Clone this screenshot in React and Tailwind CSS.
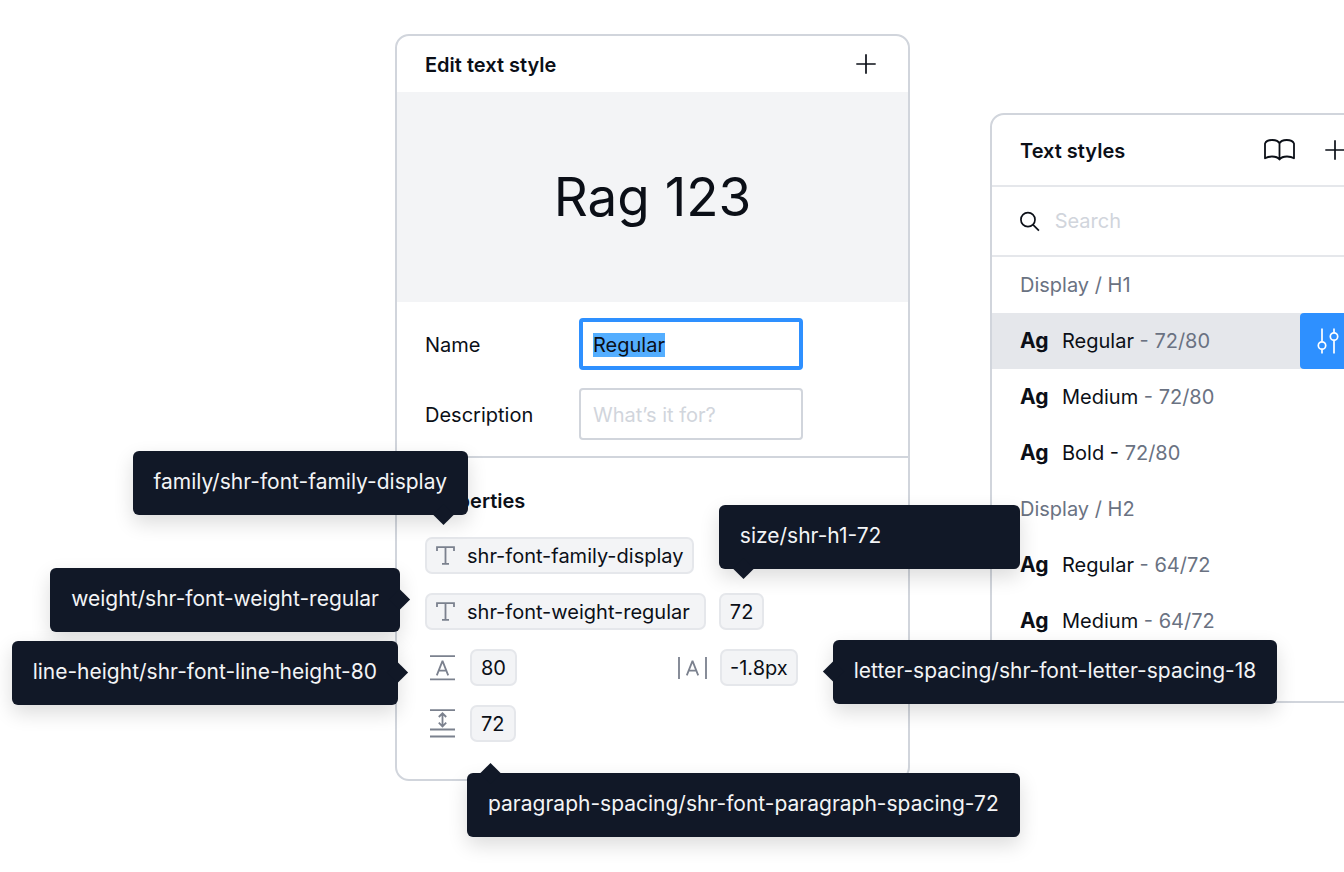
import { useEffect, useRef } from "react";

function Tooltip({ place, arrow, children }) {
  return (
    <div
      role="tooltip"
      className={`absolute z-20 rounded-md bg-[#111827] px-[21px] pt-4 pb-[18px] text-[21px] leading-[30px] whitespace-nowrap text-gray-100 shadow-[0_8px_20px_rgba(0,0,0,0.14)] ${place}`}
    >
      {children}
      <span className={`absolute size-[15px] rotate-45 bg-[#111827] ${arrow}`} />
    </div>
  );
}

function Chip({ className = "px-[9px]", children }) {
  return (
    <div
      className={`flex h-[37px] items-center rounded-[7px] border-2 border-gray-200 bg-gray-100 ${className}`}
    >
      {children}
    </div>
  );
}

function TypeIcon() {
  return (
    <svg width="19" height="19" viewBox="0 0 19 19" fill="none" stroke="#7b818e" strokeWidth="1.8" aria-hidden="true">
      <path d="M1 5V1.2h17V5M9.5 1.2v16.6M6 17.8h7" />
    </svg>
  );
}

function LineHeightIcon() {
  return (
    <svg width="25" height="26" viewBox="0 0 25 26" fill="none" stroke="#7b818e" strokeWidth="1.8" aria-hidden="true">
      <path d="M0 1.2h25M0 24.3h25" />
      <path d="M6.800 20.300 12.300 6.300h.4L18.200 20.300M8.600 15.700h7.800" />
    </svg>
  );
}

function LetterSpacingIcon() {
  return (
    <svg width="29" height="22" viewBox="0 0 29 22" fill="none" stroke="#7b818e" strokeWidth="1.8" aria-hidden="true">
      <path d="M1 0v22M28 0v22" />
      <path d="M8.800 18.300 14.300 4.300h.4L20.200 18.300M10.600 13.700h7.800" />
    </svg>
  );
}

function ParagraphSpacingIcon() {
  return (
    <svg width="25" height="29" viewBox="0 0 25 29" fill="none" stroke="#7b818e" strokeWidth="1.8" aria-hidden="true">
      <path d="M0 1.2h25M0 20.5h25M0 27.5h25" />
      <path d="M12.5 4.5v12.5M8.8 8l3.7-3.7L16.2 8M8.8 13.7l3.7 3.7 3.7-3.7" />
    </svg>
  );
}

function PlusIcon() {
  return (
    <svg width="20" height="20" viewBox="0 0 20 20" stroke="#0b0f17" strokeWidth="1.7" aria-hidden="true">
      <path d="M10 .3v19.4M.3 10h19.4" />
    </svg>
  );
}

function BookIcon() {
  return (
    <svg width="31" height="22" viewBox="0 0 31 22" fill="none" stroke="#0b0f17" strokeWidth="1.8" strokeLinejoin="round" aria-hidden="true">
      <path d="M15.500 4.500C14.500 2 12 1 8.300 1 4.500 1 2 2 1 4.500V19.300C3 18 5 17.500 8 17.500 11.500 17.500 14 18.300 15.500 20.500 17 18.300 19.500 17.500 23 17.500 26 17.500 28 18 30 19.300V4.500C29 2 26.500 1 22.700 1 19 1 16.500 2 15.500 4.500ZM15.500 4.500V20.500" />
    </svg>
  );
}

function SearchIcon() {
  return (
    <svg width="21" height="21" viewBox="0 0 21 21" fill="none" stroke="#0b0f17" strokeWidth="1.8" aria-hidden="true">
      <circle cx="8.500" cy="8.500" r="7.500" />
      <path d="m13.800 13.800 6.400 6.400" />
    </svg>
  );
}

function SlidersIcon() {
  return (
    <svg width="22" height="26" viewBox="0 0 22 26" fill="none" stroke="#fff" strokeWidth="1.7" aria-hidden="true">
      <path d="M5 .5v13M5 21.500v4M17 .5v4M17 12.500v13" />
      <circle cx="5" cy="17.500" r="3.700" />
      <circle cx="17" cy="8.500" r="3.700" />
    </svg>
  );
}

function EditPanel() {
  const nameRef = useRef(null);
  useEffect(() => {
    nameRef.current.focus();
    nameRef.current.select();
  }, []);

  return (
    <section className="mt-[34px] w-[515px] shrink-0 rounded-[14px] border-2 border-gray-300 bg-white">
      <header className="flex h-14 items-center justify-between pr-8 pl-7">
        <h2 className="pt-0.5 font-semibold">Edit text style</h2>
        <button type="button" aria-label="Add">
          <PlusIcon />
        </button>
      </header>
      <div className="flex h-[210px] items-center justify-center bg-gray-100 text-[53px] leading-none">
        Rag 123
      </div>
      <div className="grid grid-cols-[154px_224px] items-center gap-y-[18px] border-b-2 border-gray-300 px-7 py-4">
        <label htmlFor="style-name" className="pt-0.5">
          Name
        </label>
        <input
          id="style-name"
          ref={nameRef}
          defaultValue="Regular"
          className="h-[52px] w-full rounded border-4 border-[#2e90ff] px-[10px] pt-0.5 leading-7 outline-none selection:bg-[#54aeff] selection:text-[#0b0f17]"
        />
        <label htmlFor="style-description" className="pt-0.5">
          Description
        </label>
        <input
          id="style-description"
          placeholder="What’s it for?"
          className="h-[52px] w-full rounded border-2 border-gray-300 px-3 pt-0.5 leading-7 outline-none placeholder:text-gray-300"
        />
      </div>
      <div className="px-7 pt-[29px] pb-[37px]">
        <h3 className="mb-[22px] font-semibold">Properties</h3>
        <div className="flex flex-col gap-[19px]">
          <div className="relative flex">
            <Chip className="gap-3 pr-[9px] pl-[9px]">
              <TypeIcon />
              shr-font-family-display
            </Chip>
            <Tooltip place="right-[calc(100%-43px)] bottom-full mb-[22px]" arrow="right-[17px] -bottom-[7px]">
              family/shr-font-family-display
            </Tooltip>
          </div>
          <div className="relative flex gap-[13px]">
            <Chip className="gap-3 pr-[14px] pl-[9px]">
              <TypeIcon />
              shr-font-weight-regular
            </Chip>
            <div className="relative">
              <Chip>72</Chip>
              <Tooltip place="bottom-full left-0 mb-6 w-[301px]" arrow="left-[17px] -bottom-[7px]">
                size/shr-h1-72
              </Tooltip>
            </div>
            <Tooltip place="right-full -top-[25px] mr-[25px]" arrow="-right-[7px] top-[24px]">
              weight/shr-font-weight-regular
            </Tooltip>
          </div>
          <div className="relative grid grid-cols-[253px_1fr]">
            <div className="flex items-center gap-[15px] pl-[5px]">
              <LineHeightIcon />
              <Chip>80</Chip>
            </div>
            <div className="flex items-center gap-[13px]">
              <LetterSpacingIcon />
              <div className="relative">
                <Chip className="px-2">-1.8px</Chip>
                <Tooltip place="left-full -top-[9px] ml-[35px]" arrow="-left-[7px] top-[24px]">
                  letter-spacing/shr-font-letter-spacing-18
                </Tooltip>
              </div>
            </div>
            <Tooltip place="right-full -top-2 mr-[27px]" arrow="-right-[7px] top-[24px]">
              line-height/shr-font-line-height-80
            </Tooltip>
          </div>
          <div className="flex items-center gap-[15px] pl-[5px]">
            <ParagraphSpacingIcon />
            <div className="relative">
              <Chip>72</Chip>
              <Tooltip place="top-full -left-[3px] mt-[31px]" arrow="left-[16px] -top-[7px]">
                paragraph-spacing/shr-font-paragraph-spacing-72
              </Tooltip>
            </div>
          </div>
        </div>
      </div>
    </section>
  );
}

const groups = [
  {
    title: "Display / H1",
    styles: [
      { name: "Regular", size: "72/80", selected: true },
      { name: "Medium", size: "72/80" },
      { name: "Bold", size: "72/80", darkDash: true },
    ],
  },
  {
    title: "Display / H2",
    styles: [
      { name: "Regular", size: "64/72" },
      { name: "Medium", size: "64/72" },
    ],
  },
];

function StyleRow({ name, size, selected, darkDash }) {
  return (
    <li className={`flex h-14 items-center pl-7 ${selected ? "bg-gray-200" : ""}`}>
      <span className="w-[42px] text-[21px] font-bold">Ag</span>
      <span className="grow">
        {name} <span className={darkDash ? "" : "text-gray-500"}>-</span>{" "}
        <span className="text-gray-500">{size}</span>
      </span>
      {selected && (
        <button
          type="button"
          aria-label="Edit style"
          className="mr-5 flex size-14 items-center justify-center rounded-l bg-[#2e90ff]"
        >
          <SlidersIcon />
        </button>
      )}
    </li>
  );
}

function StylesPanel() {
  return (
    <section className="mt-[113px] w-[388px] shrink-0 rounded-[14px] border-2 border-gray-300 bg-white">
      <header className="flex h-[72px] items-center border-b-2 border-gray-200 pr-[31px] pl-7">
        <h2 className="grow pt-0.5 font-semibold">Text styles</h2>
        <div className="flex items-center gap-[30px]">
          <button type="button" aria-label="Library">
            <BookIcon />
          </button>
          <button type="button" aria-label="Add style">
            <PlusIcon />
          </button>
        </div>
      </header>
      <label className="flex h-[70px] items-center gap-[15px] border-b-2 border-gray-200 px-7">
        <SearchIcon />
        <input
          type="search"
          aria-label="Search"
          placeholder="Search"
          className="min-w-0 grow leading-7 outline-none placeholder:text-gray-300"
        />
      </label>
      <div className="pb-[52px]">
        {groups.map((group) => (
          <div key={group.title}>
            <h3 className="flex h-14 items-center pl-7 text-gray-500">{group.title}</h3>
            <ul>
              {group.styles.map((style) => (
                <StyleRow key={style.name} {...style} />
              ))}
            </ul>
          </div>
        ))}
      </div>
    </section>
  );
}

export default function App() {
  return (
    <main className="flex min-h-screen items-start gap-20 overflow-hidden bg-white pl-[395px] font-['Inter',sans-serif] text-[20px] leading-7 text-[#0b0f17]">
      <EditPanel />
      <StylesPanel />
    </main>
  );
}
